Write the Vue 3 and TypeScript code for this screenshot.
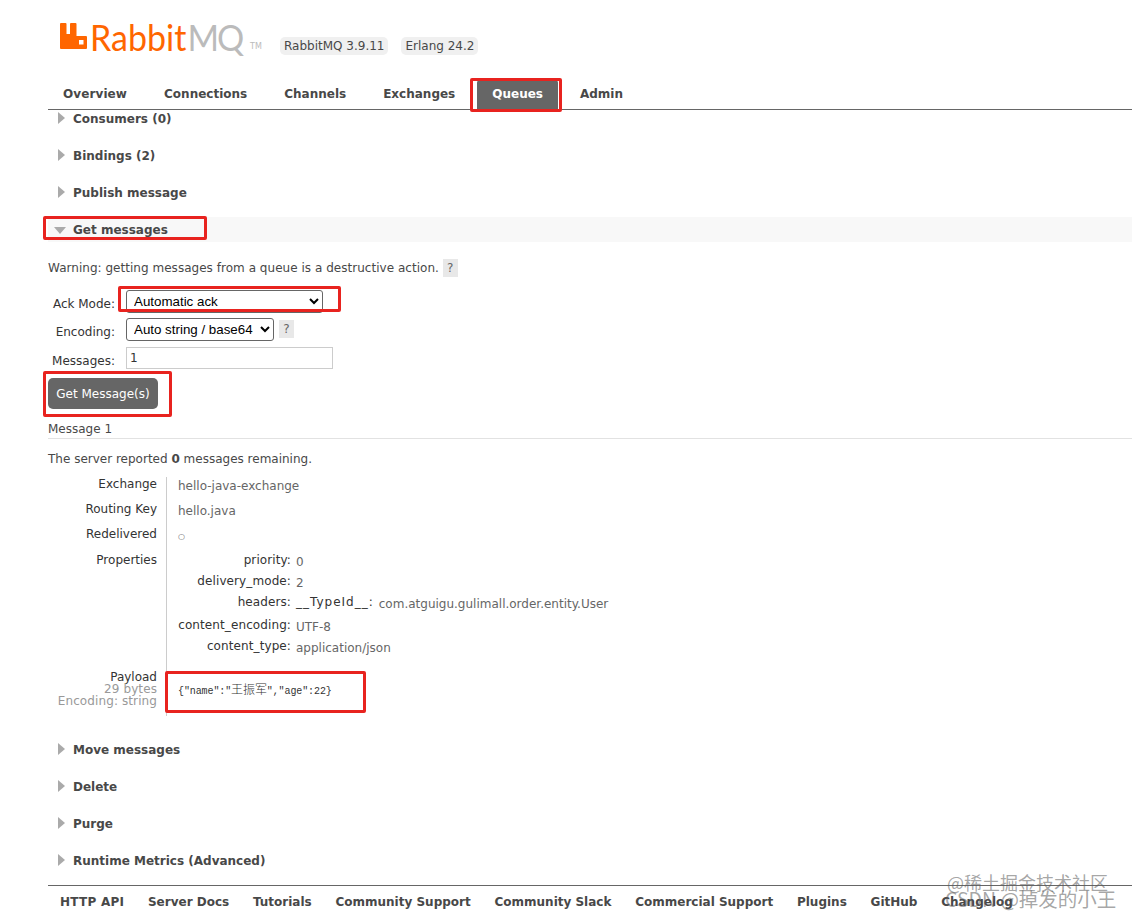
<script setup lang="ts">
const tabs = ['Overview', 'Connections', 'Channels', 'Exchanges', 'Queues', 'Admin']
const footer = ['HTTP API', 'Server Docs', 'Tutorials', 'Community Support', 'Community Slack', 'Commercial Support', 'Plugins', 'GitHub', 'Changelog']
const collapsedTop = ['Bindings (2)', 'Publish message']
const collapsedBottom = ['Move messages', 'Delete', 'Purge', 'Runtime Metrics (Advanced)']
const props = [
  { k: 'priority:', v: '0' },
  { k: 'delivery_mode:', v: '2' },
  { k: 'headers:', v: 'com.atguigu.gulimall.order.entity.User', sub: '__TypeId__:' },
  { k: 'content_encoding:', v: 'UTF-8' },
  { k: 'content_type:', v: 'application/json' },
]
</script>

<template>
  <div class="page">
    <header class="top">
      <div class="logo">
        <svg class="mark" width="27" height="26" viewBox="0 0 27 26">
          <path fill="#f60" fill-rule="evenodd" d="M1 0h4.500a1 1 0 0 1 1 1v10h3.500V1a1 1 0 0 1 1-1h4.500a1 1 0 0 1 1 1v12h9.500a1 1 0 0 1 1 1v11a1 1 0 0 1-1 1H1a1 1 0 0 1-1-1V1a1 1 0 0 1 1-1z M19 17v4.500h4.500V17z" />
        </svg>
        <span class="word"><span class="or">Rabbit</span><span class="gy">MQ</span></span>
        <span class="tm">TM</span>
      </div>
      <span class="pill first-pill">RabbitMQ 3.9.11</span>
      <span class="pill">Erlang 24.2</span>
    </header>

    <nav class="tabs">
      <a v-for="t in tabs" :key="t" class="tab" :class="{ on: t === 'Queues' }">{{ t }}</a>
    </nav>

    <div class="head head-first"><i class="tri"></i>Consumers (0)</div>
    <div v-for="s in collapsedTop" :key="s" class="head"><i class="tri"></i>{{ s }}</div>
    <div class="head open"><i class="tri-down"></i>Get messages</div>

    <section class="get">
      <p class="warn">Warning: getting messages from a queue is a destructive action. <span class="help">?</span></p>
      <div class="form-row r1">
        <label>Ack Mode:</label>
        <select class="sel-ack"><option>Automatic ack</option></select>
      </div>
      <div class="form-row r2">
        <label>Encoding:</label>
        <select class="sel-enc"><option>Auto string / base64</option></select>
        <span class="help">?</span>
      </div>
      <div class="form-row r3">
        <label>Messages:</label>
        <input class="msg-input" value="1" />
      </div>
      <button class="go">Get Message(s)</button>
      <div class="msg-title">Message 1</div>
      <p class="remain">The server reported <b>0</b> messages remaining.</p>

      <div class="facts">
        <div class="fact h25"><div class="th">Exchange</div><div class="td">hello-java-exchange</div></div>
        <div class="fact h25"><div class="th">Routing Key</div><div class="td">hello.java</div></div>
        <div class="fact h26"><div class="th">Redelivered</div><div class="td circ">○</div></div>
        <div class="fact props-row">
          <div class="th">Properties</div>
          <div class="td props">
            <div v-for="p in props" :key="p.k" class="prop" :class="{ tall: p.sub }">
              <span class="pk">{{ p.k }}</span>
              <span v-if="p.sub" class="sub">{{ p.sub }}</span>
              <span class="pv">{{ p.v }}</span>
            </div>
          </div>
        </div>
        <div class="fact payload">
          <div class="th">Payload<small>29 bytes</small><small>Encoding: string</small></div>
          <div class="td pre">{"name":"<span class="cjk">王振军</span>","age":22}</div>
        </div>
      </div>
    </section>

    <div v-for="s in collapsedBottom" :key="s" class="head"><i class="tri"></i>{{ s }}</div>

    <footer class="foot">
      <a v-for="f in footer" :key="f">{{ f }}</a>
    </footer>

    <i class="mark-box b-tab"></i>
    <i class="mark-box b-get"></i>
    <i class="mark-box b-ack"></i>
    <i class="mark-box b-btn"></i>
    <i class="mark-box b-pay"></i>
    <div class="wm wm1">@稀土掘金技术社区</div>
    <div class="wm wm2">CSDN @掉发的小王</div>
  </div>
</template>

<style>
html, body { margin: 0; background: #fff; }
</style>

<style scoped>
.page {
  position: relative;
  width: 1132px;
  height: 918px;
  overflow: hidden;
  padding-left: 48px;
  box-sizing: border-box;
  font: 12px "DejaVu Sans", Verdana, sans-serif;
  color: #484848;
}
.top { height: 78px; display: flex; align-items: flex-start; }
.logo { width: 232px; height: 60px; display: flex; align-items: flex-start; padding: 23px 0 0 12px; box-sizing: border-box; flex: none; }
.mark { flex: none; }
.word { display: block; width: 155px; flex: none; font: 400 34px/28px "Lato", sans-serif; margin-left: 3px; transform: scaleY(1.1); transform-origin: 0 50%; white-space: nowrap; }
.or { color: #f60; }
.gy { color: #bbb; letter-spacing: -2px; margin-left: 1px; }
.tm { font-size: 8px; color: #bbb; margin: 19px 0 0 5px; }
.pill { margin-top: 37px; height: 18px; line-height: 18px; padding: 0 4px; background: #f0f0f0; border-radius: 5px; flex: none; }
.first-pill { margin-right: 13px; }
.tabs { height: 32px; display: flex; gap: 7px; border-bottom: 1px solid #666; box-sizing: border-box; align-items: flex-end; }
.tab { padding: 0 15px; height: 29px; line-height: 29px; font-weight: 700; color: #484848; border-radius: 3px 3px 0 0; }
.tab:first-child { letter-spacing: 0.1px; }
.tab.on { background: #666; color: #fff; }
.head { height: 25px; line-height: 27px; margin-bottom: 12px; font-size: 12px; font-weight: 700; position: relative; padding-left: 25px; }
.head-first { height: 21px; line-height: 19px; }
.open { background: #f8f8f8; margin-bottom: 0; }
.tri { position: absolute; left: 10px; top: 6px; border-left: 7px solid #aaa; border-top: 6px solid transparent; border-bottom: 6px solid transparent; }
.head-first .tri { top: 2px; }
.tri-down { position: absolute; left: 6px; top: 10px; border-top: 7px solid #aaa; border-left: 6px solid transparent; border-right: 6px solid transparent; }
.get { height: 495px; }
p { margin: 0; }
.warn { padding-top: 17px; height: 18px; line-height: 18px; letter-spacing: 0.03px; }
.help { display: inline-block; width: 15px; height: 18px; line-height: 18px; text-align: center; background: #e8e8e8; color: #666; }
.form-row { display: flex; align-items: center; }
.form-row label { width: 67px; text-align: right; color: #333; margin-right: 11px; flex: none; padding-top: 6px; }
.r1 { margin-top: 12px; height: 24px; }
.r2 { margin-top: 4px; height: 24px; }
.r3 { margin-top: 5px; height: 23px; }
.r2 .help { margin-left: 5px; }
select { font: 13.33px "Liberation Sans", Arial, sans-serif; color: #000; background: #fff; border: 1px solid #666; border-radius: 3px; height: 23px; padding: 0 0 0 3px; box-sizing: border-box; }
.sel-ack { width: 197px; }
.sel-enc { width: 148px; }
.msg-input { width: 207px; height: 22px; box-sizing: border-box; border: 1px solid #ccc; font: 12px "DejaVu Sans", sans-serif; padding: 0 3px; color: #333; }
.go { display: block; margin-top: 9px; width: 110px; height: 31px; border: 0; border-radius: 5px; background: #666; color: #fff; font: 12px "DejaVu Sans", sans-serif; padding: 0; }
.msg-title { height: 29px; line-height: 40px; border-bottom: 1px solid #e2e2e2; }
.remain { margin-top: 12px; line-height: 16px; height: 16px; }
.remain b { font-weight: 700; }
.facts { margin-top: 10px; }
.fact { display: flex; }
.th { width: 109px; flex: none; text-align: right; color: #333; padding-right: 9px; border-right: 1px solid #ccc; line-height: 14px; }
.td { padding-left: 11px; color: #666; line-height: 14px; }
.h25 { height: 25px; }
.h26 { height: 26px; }
.h25 .td { padding-top: 2px; }
.circ { padding-top: 3px; font-size: 8px; }
.props-row { height: 117px; }
.props { padding-left: 0; }
.prop { display: flex; align-items: flex-start; height: 21px; }
.prop.tall { height: 23px; }
.pk { width: 124px; text-align: right; color: #333; margin-right: 5px; flex: none; line-height: 14px; letter-spacing: 0.1px; }
.pv { padding-top: 2px; }
.sub { color: #333; margin-right: 5px; letter-spacing: 1px; }
.payload { height: 46px; }
.th small { display: block; font-size: 12px; color: #999; line-height: 12px; margin-top: -1px; letter-spacing: 0.1px; }
.th small + small { margin-top: 0; }
.pre { font-size: 10px; font-family: "Liberation Mono", "Noto Sans CJK SC", monospace; padding-top: 12px; color: #333; letter-spacing: -0.1px; }
.cjk { font-size: 12px; font-family: "Noto Sans CJK SC", sans-serif; font-weight: 300; }
.foot { position: absolute; left: 48px; right: 0; top: 885px; height: 33px; border-top: 1px solid #666; padding-left: 12px; display: flex; gap: 23.75px; line-height: 32px; font-weight: 700; box-sizing: border-box; }
.foot a:first-child { letter-spacing: 0.25px; }
.mark-box { position: absolute; border: 3px solid #e8231f; border-radius: 2px; box-sizing: border-box; }
.b-tab { left: 470px; top: 78px; width: 92px; height: 34px; }
.b-get { left: 43px; top: 216px; width: 164px; height: 24px; }
.b-ack { left: 118px; top: 286px; width: 223px; height: 26px; }
.b-btn { left: 43px; top: 371px; width: 129px; height: 46px; }
.b-pay { left: 165px; top: 671px; width: 201px; height: 42px; }
.wm { position: absolute; color: rgba(90, 90, 90, 0.55); font-family: "Noto Sans CJK SC", sans-serif; white-space: nowrap; line-height: 20px; }
.wm1 { left: 947px; top: 872px; font-size: 18px; }
.wm2 { left: 945px; top: 889px; font-size: 19.5px; }
</style>
